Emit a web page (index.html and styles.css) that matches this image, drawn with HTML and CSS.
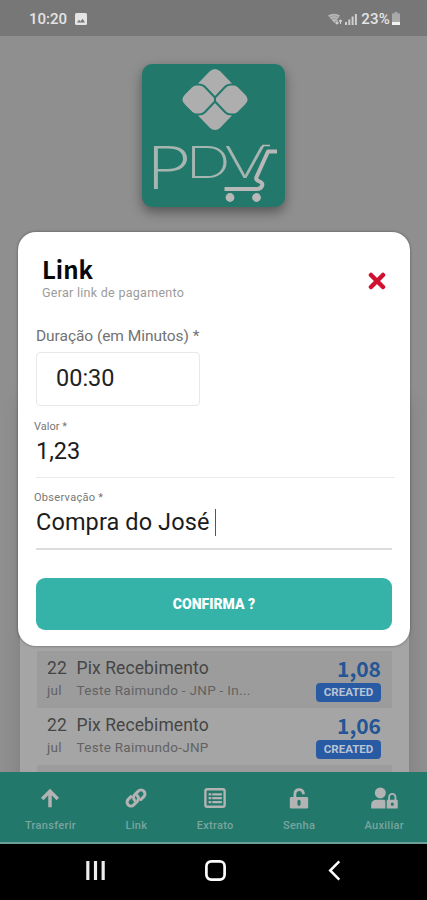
FILE: index.html
```html
<!DOCTYPE html>
<html lang="pt-BR">
<head>
  <meta charset="UTF-8">
  <meta name="viewport" content="width=device-width, initial-scale=1.0">
  <title>PDV Pix - Link</title>
  <link rel="stylesheet" href="styles.css">
</head>
<body>
  <div class="status-bar">
    <div class="status-left">
      <span class="clock">10:20</span>
      <svg class="icon-photo" viewBox="0 0 12 12">
        <rect width="12" height="12" rx="1.5" fill="#e4e4e4"/>
        <path d="M2 9.500l2-2.700 1.500 1.600L7.600 5.800 10 9.500z" fill="#777"/>
      </svg>
    </div>
    <div class="status-right">
      <svg class="icon-wifi" viewBox="0 0 15 12">
        <path d="M0 2.500Q6 -1 12 2.500L6.500 10z" fill="#b9b9b9"/>
        <path d="M2 3.800Q6 1.500 10 3.800M3.500 6Q6 4.500 8.500 6" fill="none" stroke="#777" stroke-width=".5"/>
        <path d="M9 7v4M7.500 9.500L9 11l1.500-1.500M12.500 11V7M11 8.500L12.500 7 14 8.500" fill="none" stroke="#d0d0d0" stroke-width="1.100"/>
      </svg>
      <svg class="icon-signal" viewBox="0 0 12 12">
        <path d="M0 9h2v3H0zM3.300 6.500h2V12h-2zM6.600 3.500h2V12h-2zM9.900 1h2v11h-2z" fill="#cfcfcf"/>
      </svg>
      <span class="battery-text">23%</span>
      <svg class="icon-battery" viewBox="0 0 8 13">
        <path d="M2.500 0h3v1.500H8V13H0V1.500h2.500z" fill="#a9a9a9"/>
        <path d="M0 10h8v3H0z" fill="#f2f2f2"/>
      </svg>
    </div>
  </div>

  <main>
    <div class="logo">
      <svg viewBox="0 0 143 143">
        <g fill="#aeaeae">
          <path d="M56 19.500L67.500 7.500q5.500-5 11 0L90 19.500q-5 0-7.500 2.500L73 32 63.500 22q-2.500-2.500-7.500-2.500z"/>
          <path d="M56 51.500L67.500 63.500q5.500 5 11 0L90 51.500q-5 0-7.500-2.500L73 39 63.500 49q-2.500 2.500-7.500 2.500z"/>
          <path d="M54 21.500h3.500q2.500 0 4.500 2l10 10.500v3L62 47.500q-2 2-4.500 2H54q-2 0-4-2l-7-7q-5-5 0-10l7-7q2-2 4-2z"/>
          <path d="M92 21.500h-3.500q-2.500 0-4.500 2L74 34v3L84 47.500q2 2 4.500 2H92q2 0 4-2l7-7q5-5 0-10l-7-7q-2-2-4-2z"/>
        </g>
        <g class="logo-text">
          <text x="4" y="125" font-size="62" textLength="44" lengthAdjust="spacingAndGlyphs">P</text>
          <text x="44" y="113.500" font-size="46" textLength="44" lengthAdjust="spacingAndGlyphs">D</text>
          <text x="83" y="113.500" font-size="46" textLength="40" lengthAdjust="spacingAndGlyphs">V</text>
        </g>
        <g fill="none" stroke="#b8b8b8" stroke-linejoin="round">
          <path d="M120 81.500h8" stroke-width="1.500"/>
          <path d="M135 87.500h-9L114.500 113q-1 3 2 4 5 2 3.500 5t-5 3H82.500" stroke-width="4"/>
        </g>
        <circle cx="88" cy="133.500" r="4.400" fill="#b8b8b8"/>
        <circle cx="114.500" cy="133.500" r="4.400" fill="#b8b8b8"/>
      </svg>
    </div>

    <section class="statement">
      <div class="entry striped">
        <div class="entry-date"><b>22</b><small>jul</small></div>
        <div class="entry-info"><b>Pix Recebimento</b><small>Teste Raimundo - JNP - In...</small></div>
        <div class="entry-value"><strong>1,08</strong><span class="badge">CREATED</span></div>
      </div>
      <div class="entry">
        <div class="entry-date"><b>22</b><small>jul</small></div>
        <div class="entry-info"><b>Pix Recebimento</b><small>Teste Raimundo-JNP</small></div>
        <div class="entry-value"><strong>1,06</strong><span class="badge">CREATED</span></div>
      </div>
      <div class="entry striped"></div>
    </section>
  </main>

  <nav class="tabs">
    <a class="tab">
      <svg viewBox="0 0 24 24"><path d="M12 22V5M3.500 13L12 4.500l8.500 8.500" fill="none" stroke="#b3b3b3" stroke-width="3.800"/></svg>
      <span>Transferir</span>
    </a>
    <a class="tab">
      <svg viewBox="0 0 24 24">
        <g fill="none" stroke="#b3b3b3" stroke-width="3.300" stroke-linecap="round">
          <path d="M10.500 14.500a4.300 4.300 0 0 1 0-6l4-4a4.200 4.200 0 0 1 6 6l-3 3"/>
          <path d="M13.500 9.500a4.300 4.300 0 0 1 0 6l-4 4a4.200 4.200 0 0 1-6-6l3-3"/>
        </g>
      </svg>
      <span>Link</span>
    </a>
    <a class="tab">
      <svg viewBox="0 0 24 24">
        <rect x="1.500" y="2.500" width="21" height="19" rx="2" fill="none" stroke="#b3b3b3" stroke-width="2.600"/>
        <path d="M5 8h3M9 8H19.500M5 12.200h3M9 12.200H19.500M5 16.500h3M9 16.500H19.500" stroke="#b3b3b3" stroke-width="2.400"/>
      </svg>
      <span>Extrato</span>
    </a>
    <a class="tab">
      <svg viewBox="0 0 24 24">
        <path d="M7.500 12V7.500a4.700 4.700 0 0 1 9.200-1.300v1.800" fill="none" stroke="#b3b3b3" stroke-width="3"/>
        <path fill-rule="evenodd" d="M3.500 11h17a1.500 1.500 0 0 1 1.500 1.500V22a1.500 1.500 0 0 1-1.500 1.500h-17A1.500 1.500 0 0 1 2 22v-9.500A1.500 1.500 0 0 1 3.500 11zM12 14a1.700 1.700 0 0 0-1.700 1.700v3a1.700 1.700 0 0 0 3.400 0v-3A1.700 1.700 0 0 0 12 14z" fill="#b3b3b3"/>
      </svg>
      <span>Senha</span>
    </a>
    <a class="tab">
      <svg class="wide" viewBox="0 0 30 24">
        <g fill="#b3b3b3">
          <circle cx="11" cy="6.500" r="6"/>
          <path d="M1 23.500V20q0-6 6-6h8q1.500 0 1.500 2v7.500z"/>
          <path fill-rule="evenodd" d="M18 14h11a1 1 0 0 1 1 1v7.500a1 1 0 0 1-1 1H18zM24 17a1.500 1.500 0 1 0 .1 3.500A1.500 1.500 0 0 0 24 17z"/>
        </g>
        <path d="M20.500 14.500V11a3.500 3.500 0 0 1 7 0v3.500" fill="none" stroke="#b3b3b3" stroke-width="2"/>
      </svg>
      <span>Auxiliar</span>
    </a>
  </nav>

  <div class="system-bar">
    <svg viewBox="0 0 24 24"><path d="M4 2v20M12 2v20M20 2v20" stroke="#eee" stroke-width="3.300"/></svg>
    <svg viewBox="0 0 24 24"><rect x="2.500" y="2.500" width="19" height="19" rx="5" fill="none" stroke="#fff" stroke-width="2.800"/></svg>
    <svg viewBox="0 0 24 24"><path d="M17 2.500L7.500 12l9.500 9.500" fill="none" stroke="#fff" stroke-width="2.600"/></svg>
  </div>

  <form class="modal">
    <header class="modal-header">
      <div>
        <h1>Link</h1>
        <p>Gerar link de pagamento</p>
      </div>
      <svg class="close" viewBox="0 0 18 18"><path d="M3 3l12 12M15 3L3 15" stroke="#d0102f" stroke-width="4.500" stroke-linecap="round"/></svg>
    </header>
    <label class="duration-label">Duração (em Minutos) *</label>
    <div class="duration">00:30</div>
    <label class="field-label">Valor *</label>
    <div class="field">1,23</div>
    <label class="field-label wide-label">Observação *</label>
    <div class="field focused">Compra do José<i class="caret"></i></div>
    <button class="confirm" type="button">CONFIRMA ?</button>
  </form>
</body>
</html>
```
FILE: styles.css
```css
* {
  box-sizing: border-box;
}
body {
  font-family: Roboto, sans-serif;
  margin: 0;
  height: 900px;
  display: flex;
  flex-direction: column;
  position: relative;
  overflow: hidden;
  background-color: #8f8f8f;
}
svg {
  display: block;
  flex: none;
}

/* status bar */
.status-bar {
  height: 36px;
  padding: 1px 27px 0 29px;
  display: flex;
  justify-content: space-between;
  align-items: center;
  background-color: #777;
  color: #e4e4e4;
  font-size: 15px;
  font-weight: 500;
}
.status-left, .status-right {
  display: flex;
  align-items: center;
}
.icon-photo {
  width: 12px;
  height: 12px;
  margin-left: 8px;
}
.icon-wifi {
  width: 15px;
  height: 12px;
}
.icon-signal {
  width: 12px;
  height: 12px;
  margin: 0 4px 0 2px;
}
.icon-battery {
  width: 8px;
  height: 13px;
  margin-left: 2px;
}
.battery-text {
  letter-spacing: 0.2px;
}

main {
  flex: 1;
  min-height: 0;
  overflow: hidden;
}
.logo {
  width: 143px;
  height: 143px;
  margin: 28px auto 0;
  border-radius: 10px;
  background-color: #23786c;
  box-shadow: 0 5px 12px rgba(0, 0, 0, 0.4);
}
.logo-text {
  font-family: Lato, sans-serif;
  font-weight: 300;
  fill: #a5b5b0;
}

/* statement list */
.statement {
  margin: 193px 18px 0 20px;
  height: 400px;
  padding: 251px 17px 0;
  background-color: #a5a5a5;
  box-shadow: 0 0 18px rgba(0, 0, 0, 0.12);
}
.entry {
  height: 57px;
  padding: 6px 11px 0 10px;
  display: flex;
  color: #454545;
}
.striped {
  background-color: #9c9c9c;
}
.entry-date, .entry-info, .entry-value {
  display: flex;
  flex-direction: column;
}
.entry-date {
  width: 29.5px;
}
.entry-info {
  flex: 1;
}
.entry b {
  font-size: 17.5px;
  font-weight: 400;
  line-height: 22px;
  letter-spacing: 0.1px;
}
.entry small {
  font-size: 13.5px;
  line-height: 22px;
  letter-spacing: 0.3px;
  color: #626262;
}
.entry-value {
  align-items: flex-end;
}
.entry-value strong {
  height: 26px;
  font-family: "Noto Sans CJK JP", sans-serif;
  font-size: 21px;
  font-weight: 700;
  line-height: 22px;
  color: #245596;
}
.badge {
  width: 65px;
  height: 19px;
  border-radius: 4px;
  background-color: #295ba5;
  color: #b9c3d3;
  font-size: 11.5px;
  font-weight: 700;
  line-height: 19px;
  text-align: center;
}

/* bottom navigation */
.tabs {
  height: 72px;
  padding: 0 23px 0 25px;
  display: flex;
  justify-content: space-between;
  border-bottom: 2px solid #6d9e97;
  background-color: #23786c;
}
.tab {
  padding-top: 15px;
  display: flex;
  flex-direction: column;
  align-items: center;
  color: #79a59e;
  font-size: 11px;
  font-weight: 500;
  letter-spacing: 0.3px;
}
.tab svg {
  width: 22px;
  height: 22px;
}
.tab .wide {
  width: 28px;
}
.tab span {
  margin-top: 10px;
}
.system-bar {
  height: 56px;
  padding: 0 81px 3px 84px;
  display: flex;
  justify-content: space-between;
  align-items: center;
  background-color: #000;
}
.system-bar svg {
  width: 23px;
  height: 23px;
}

/* dialog */
.modal {
  position: absolute;
  top: 232px;
  left: 18px;
  width: 392px;
  height: 414px;
  padding: 23px 18px 0;
  display: flex;
  flex-direction: column;
  border-radius: 18px;
  background-color: #fff;
  box-shadow: 0 0 3px rgba(0, 0, 0, 0.4);
}
.modal-header {
  height: 70px;
  padding: 0 6px;
  display: flex;
  justify-content: space-between;
}
.modal-header h1 {
  margin: 0;
  height: 30px;
  font-family: "Noto Sans CJK JP", sans-serif;
  font-size: 24px;
  line-height: 27px;
  color: #080808;
}
.modal-header p {
  margin: 0;
  font-size: 12.5px;
  line-height: 16px;
  letter-spacing: 0.28px;
  color: #9b9b9b;
}
.close {
  width: 18px;
  height: 18px;
  margin-top: 17px;
}
.duration-label {
  font-size: 15.5px;
  line-height: 22px;
  letter-spacing: -0.05px;
  color: #727272;
}
.duration {
  width: 164px;
  height: 54px;
  margin-top: 5px;
  padding-left: 19px;
  border: 1px solid #e8e8e8;
  border-radius: 4px;
  font-size: 23.5px;
  line-height: 51px;
  color: #222;
}
.field-label {
  margin: 14px 0 0 -2px;
  font-size: 11px;
  line-height: 14px;
  color: #777;
}
.wide-label {
  margin-top: 13px;
  letter-spacing: 0.3px;
}
.field {
  height: 44px;
  margin-right: -3px;
  display: flex;
  border-bottom: 1px solid #e9e9e9;
  font-size: 23.5px;
  line-height: 35px;
  color: #1c1c1c;
}
.focused {
  margin-right: 0;
  height: 45px;
  border-bottom: 2px solid #dcdcdc;
  letter-spacing: 0.1px;
}
.caret {
  width: 1px;
  height: 27px;
  margin: 4px 0 0 6px;
  background-color: #555;
}
.confirm {
  height: 52px;
  margin-top: 28px;
  border: none;
  border-radius: 9px;
  background-color: #36b3a9;
  color: #fff;
  font-family: Roboto, sans-serif;
  font-size: 14px;
  font-weight: 900;
}
```
